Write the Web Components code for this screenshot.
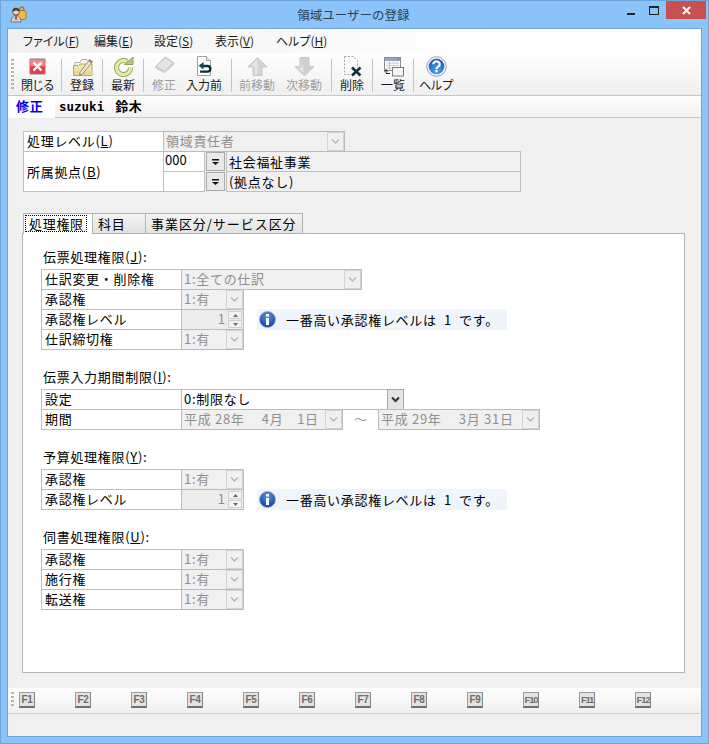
<!DOCTYPE html>
<html lang="ja">
<head>
<meta charset="utf-8">
<title>領域ユーザーの登録</title>
<style>
  html, body { margin: 0; padding: 0; }
  body { font-family: "Noto Sans CJK JP", "Liberation Sans", sans-serif; font-size: 13px; color: #000; }
</style>
</head>
<body>

<app-window caption="領域ユーザーの登録">
  <menu-bar>
    <menu-item label="ファイル" key="F" style="width:71px"></menu-item>
    <menu-item label="編集" key="E" style="width:60px"></menu-item>
    <menu-item label="設定" key="S" style="width:61px"></menu-item>
    <menu-item label="表示" key="V" style="width:61px"></menu-item>
    <menu-item label="ヘルプ" key="H"></menu-item>
  </menu-bar>

  <tool-bar>
    <tool-btn label="閉じる" style="width:47px" icon="close"></tool-btn>
    <tool-sep></tool-sep>
    <tool-btn label="登録" style="width:40px" icon="save"></tool-btn>
    <tool-sep></tool-sep>
    <tool-btn label="最新" style="width:40px" icon="refresh"></tool-btn>
    <tool-sep></tool-sep>
    <tool-btn label="修正" style="width:40px" icon="eraser" disabled></tool-btn>
    <tool-btn label="入力前" style="width:40px;margin-right:7px" icon="back"></tool-btn>
    <tool-sep></tool-sep>
    <tool-btn label="前移動" style="width:50px" icon="up" disabled></tool-btn>
    <tool-btn label="次移動" style="width:44px;margin-right:5px" icon="down" disabled></tool-btn>
    <tool-sep></tool-sep>
    <tool-btn label="削除" style="width:40px" icon="del"></tool-btn>
    <tool-sep></tool-sep>
    <tool-btn label="一覧" style="width:40px" icon="list"></tool-btn>
    <tool-sep></tool-sep>
    <tool-btn label="ヘルプ" style="width:44px" icon="help"></tool-btn>
  </tool-bar>

  <record-strip mode="修正" user="suzuki" name="鈴木"></record-strip>

  <form-body>
    <div slot="head">
      <f-row label="処理レベル" key="L"><f-combo w="182" disabled>領域責任者</f-combo></f-row>
      <branch-field label="所属拠点" key="B">
        <branch-line code="000" name="社会福祉事業"></branch-line>
        <branch-line code="" name="(拠点なし)"></branch-line>
      </branch-field>
    </div>

    <tab-strip>
      <tab-head selected style="width:70px">処理権限</tab-head>
      <tab-head style="width:53px">科目</tab-head>
      <tab-head style="width:157px;letter-spacing:.95px">事業区分/サービス区分</tab-head>
    </tab-strip>

    <tab-panel>
      <f-section label="伝票処理権限" key="J">
        <f-row label="仕訳変更・削除権"><f-combo w="181" disabled>1:全ての仕訳</f-combo></f-row>
        <f-row label="承認権"><f-combo w="63" disabled>1:有</f-combo></f-row>
        <f-row label="承認権レベル"><f-spin value="1"></f-spin><info-note slot="after">一番高い承認権レベルは  1  です。</info-note></f-row>
        <f-row label="仕訳締切権"><f-combo w="63" disabled>1:有</f-combo></f-row>
      </f-section>

      <f-section label="伝票入力期間制限" key="I">
        <f-row label="設定"><f-combo w="223">0:制限なし</f-combo></f-row>
        <f-row label="期間">
          <f-combo w="162" disabled>平成 28年　 4月　1日</f-combo>
          <date-sep slot="after">～</date-sep>
          <f-combo slot="after" w="162" disabled>平成 29年　 3月 31日</f-combo>
        </f-row>
      </f-section>

      <f-section label="予算処理権限" key="Y">
        <f-row label="承認権"><f-combo w="63" disabled>1:有</f-combo></f-row>
        <f-row label="承認権レベル"><f-spin value="1"></f-spin><info-note slot="after">一番高い承認権レベルは  1  です。</info-note></f-row>
      </f-section>

      <f-section label="伺書処理権限" key="U">
        <f-row label="承認権"><f-combo w="63" disabled>1:有</f-combo></f-row>
        <f-row label="施行権"><f-combo w="63" disabled>1:有</f-combo></f-row>
        <f-row label="転送権"><f-combo w="63" disabled>1:有</f-combo></f-row>
      </f-section>
    </tab-panel>
  </form-body>

  <fkey-bar></fkey-bar>
  <status-bar></status-bar>
</app-window>

<script>
const ICONS = {
  close: `<rect x="2.5" y="2.5" width="16" height="16" rx="1.5" fill="#e4515c" stroke="#bdbdbd"/><rect x="3.5" y="3.500" width="14" height="6.500" fill="#f28a90"/><rect x="3.5" y="11" width="14" height="6.500" fill="#dd3f4c"/><path d="M6.5 6.500l8 8M14.5 6.500l-8 8" stroke="#fff" stroke-width="2.400"/>`,
  save: `<path d="M3 6.500h5l1.500-3H15l2 2v8H3z" fill="#fbfbf6" stroke="#b8ad8c"/><path d="M1.500 9.500h5l1.500-1.500h12v11.500H1.500z" fill="#f1e3b1" stroke="#bba86f"/><path d="M2 15h18v4H2z" fill="#e8d59a"/><path d="M8 16.500L17.500 3.500l3 2-10 12.500-3 1z" fill="#efe8d2" stroke="#8a7a5a" stroke-width=".8"/><path d="M17 4.500l3 2" stroke="#c9674f" stroke-width="1.800"/>`,
  refresh: `<path d="M17.500 11.500a7 7 0 1 1-3.500-6" fill="none" stroke="#8fa455" stroke-width="5"/><path d="M17.500 11.500a7 7 0 1 1-3.500-6" fill="none" stroke="#e2edac" stroke-width="3.200"/><path d="M11.500 8.500H20V1z" fill="#b9c48c" stroke="#8fa455"/>`,
  eraser: `<path d="M1.500 10.500L10.500 1.500q1-.8 2 0l7 5q1 1 0 2L11 16q-1 .8-2 0l-7.500-4.500q-.6-.5 0-1z" fill="#d6d6d6" stroke="#c4c4c4"/><path d="M3 10L11 2.500l6.500 4.500L9.500 14.500z" fill="#e4e4e4"/><path d="M2 11l7.500 5 .5-2" fill="#cacaca"/>`,
  back: `<path d="M3.500 .5h9l4 4v15h-13z" fill="#fff" stroke="#9f9f9f"/><path d="M12.500 .5v4h4" fill="#e9e9e9" stroke="#9f9f9f"/><path d="M9 10h4.500a2.800 2.800 0 0 1 0 5.600H6" fill="none" stroke="#0d2e38" stroke-width="2.400"/><path d="M9.500 6v7.500L4.500 9.800z" fill="#0f4a58"/>`,
  up: `<path d="M10.500 1.500L20 11h-5v8.500H6V11H1z" fill="#d4d4d4" stroke="#c8c8c8"/><path d="M10.500 3L4 9.500h4V18h2.500z" fill="#e6e6e6"/>`,
  down: `<path d="M10.500 20L1 10.500h5V1.500h9v9h5z" fill="#cfcfcf" stroke="#c8c8c8"/><path d="M7.500 2.500v9H4l6 6z" fill="#e2e2e2"/>`,
  del: `<path d="M2.500 .5h9l4 4v7M2.500 .5v18h6" fill="none" stroke="#a5a5a5" stroke-dasharray="2 1.500"/><path d="M10 11.500l8.500 8M18.500 11.500l-8.500 8" stroke="#16323a" stroke-width="2.600"/>`,
  list: `<rect x="1.500" y="1.500" width="16" height="13" fill="#fff" stroke="#8d8d8d"/><rect x="2" y="2" width="15" height="3" fill="#95a6bb"/><rect x="14" y="2.500" width="2.500" height="1.500" fill="#d9646a"/><path d="M3 7h13M3 9.500h13M3 12h6M6.500 5.500v8" stroke="#bcc6d2"/><rect x="9.500" y="11.500" width="11" height="8.500" fill="#f4f4f4" stroke="#7a7a7a"/><path d="M3 17v-3M1.500 15.500L3 13.500l1.500 2M3 17.500h4" stroke="#222" fill="none"/>`,
  help: `<defs><radialGradient id="h" cx=".5" cy=".75" r=".75"><stop offset="0" stop-color="#4aa8ee"/><stop offset="1" stop-color="#1a53b8"/></radialGradient></defs><circle cx="10.500" cy="10.500" r="9.800" fill="#eef1f5" stroke="#99a2ac"/><circle cx="10.500" cy="10.500" r="7.800" fill="url(#h)"/><path d="M7.300 8.200a3.200 2.800 0 1 1 5 2.300c-1.100.7-1.800 1.100-1.800 2.500" fill="none" stroke="#fff" stroke-width="2.200"/><rect x="9.300" y="14" width="2.400" height="2.300" fill="#fff"/>`
};

// little helper, every element here is just a template + open shadow root
function define(tag, html, setup) {
  const tpl = document.createElement('template');
  tpl.innerHTML = html.trim().replace(/>\s+</g, '><');
  customElements.define(tag, class extends HTMLElement {
    connectedCallback() {
      if (this.shadowRoot) return;
      const root = this.attachShadow({ mode: 'open' });
      root.appendChild(tpl.content.cloneNode(true));
      if (setup) setup(this, root);
    }
  });
}

function mnemonic(label, key) {
  return key ? `${label}(<u>${key}</u>)` : label;
}

define('app-window', `
<style>
  :host { display: block; width: 709px; height: 744px; box-sizing: border-box; }
  .frame { width: 100%; height: 100%; box-sizing: border-box; display: flex; flex-direction: column;
    background: #8ac4fb; border: 1px solid #6ea6dc; }
  .title { height: 27px; flex: none; display: flex; align-items: flex-start; }
  .appicon { width: 18px; height: 18px; margin: 5px 0 0 8px; flex: none; }
  .cap { flex: 1; text-align: center; font-size: 12.5px; line-height: 28px; color: #2f3f4c; padding-left: 53px; }
  .ctl { display: flex; flex: none; align-items: flex-start; margin-right: 2px; }
  .min { width: 8px; height: 2px; background: #222; margin: 12px 14px 0 0; }
  .max { width: 8px; height: 6px; border: 1px solid #222; border-top-width: 2px; margin: 5px 7px 0 0; }
  .x { width: 40px; height: 18px; background: #c75050; color: #fff; display: flex; align-items: center; justify-content: center; }
  .client { flex: 1; margin: 0 6px 6px; border: 1px solid #6ea6dc; background: #f0f0f0; display: flex; flex-direction: column; min-height: 0; }
</style>
<div class="frame">
  <div class="title">
    <svg class="appicon" viewBox="0 0 18 18">
      <rect x="9" y="4.500" width="8" height="9" rx="2" fill="#f6bb3e" stroke="#a47a24"/>
      <path d="M10.800 5V3a2 2 0 0 1 4 0v2" fill="none" stroke="#a47a24" stroke-width="1.400"/>
      <path d="M2 16c0-4.500 2-6.500 5-6.500s5 2 5 6.500z" fill="#d2d2d2" stroke="#777"/>
      <circle cx="7" cy="5.500" r="3.500" fill="#f0d8bf" stroke="#6b5b4b"/>
      <path d="M3.500 5.500a3.500 3.500 0 0 1 7 0c-2 0-3-1-3.500-1.500-.5.800-2 1.500-3.500 1.500z" fill="#4a3a2c"/>
      <path d="M6.200 10h1.600l.4 2.500-1.200 2-1.200-2z" fill="#c7453f"/>
    </svg>
    <div class="cap"></div>
    <div class="ctl">
      <div class="min"></div>
      <div class="max"></div>
      <div class="x"><svg width="9" height="9" viewBox="0 0 9 9"><path d="M1 1l7 7M8 1L1 8" stroke="#fff" stroke-width="2"/></svg></div>
    </div>
  </div>
  <div class="client"><slot></slot></div>
</div>`, (el, root) => {
  root.querySelector('.cap').textContent = el.getAttribute('caption');
});

define('menu-bar', `
<style>
  :host { display: flex; height: 24px; flex: none; padding-left: 15px; align-items: center;
    background: linear-gradient(90deg, #f0f0f0, #fff 70%); }
</style><slot></slot>`);

define('menu-item', `
<style>
  :host { display: block; font-size: 12px; line-height: 24px; color: #1a1a1a; font-feature-settings: "palt"; white-space: nowrap; flex: none; }
</style><span></span>`, (el, root) => {
  root.querySelector('span').innerHTML = mnemonic(el.getAttribute('label'), el.getAttribute('key'));
});

define('tool-bar', `
<style>
  :host { display: flex; height: 42px; flex: none; padding-left: 3px; box-sizing: border-box; align-items: stretch;
    background: linear-gradient(#fff, #efefef); border-radius: 0 3px 0 0; }
  .grip { width: 3px; margin: 6px 0 6px 0; flex: none;
    background: repeating-linear-gradient(#b5b5b5 0 2px, transparent 2px 4px); }
</style><div class="grip"></div><slot></slot>`);

define('tool-btn', `
<style>
  :host { display: flex; flex-direction: column; align-items: center; flex: none; box-sizing: border-box; }
  svg { width: 21px; height: 21px; margin-top: 3px; flex: none; overflow: visible; }
  span { font-size: 12px; line-height: 16px; margin-top: 0; white-space: nowrap; color: #1a1a1a; font-feature-settings: "palt"; }
  :host([disabled]) span { color: #9c9c9c; }
</style><svg viewBox="0 0 21 21"></svg><span></span>`, (el, root) => {
  root.querySelector('svg').innerHTML = ICONS[el.getAttribute('icon')];
  root.querySelector('span').textContent = el.getAttribute('label');
});

define('tool-sep', `
<style>
  :host { display: block; width: 1px; flex: none; margin: 6px 0 3px; background: #c4c4c4; }
</style>`);

define('record-strip', `
<style>
  :host { display: flex; height: 23px; flex: none; box-sizing: border-box; align-items: stretch;
    border-top: 1px solid #c6c6c6; border-bottom: 1px solid #c6c6c6; background: linear-gradient(#fff, #f1f1f1); font-weight: bold; white-space: nowrap; }
  .mode { width: 47px; background: #fff; color: #0000e6; padding-left: 8px; box-sizing: border-box; font-size: 13px; line-height: 20px; letter-spacing: .7px; margin-bottom: -1px; }
  .who { padding-left: 4px; font-size: 13px; line-height: 20px; letter-spacing: .7px; }
  .latin { font-family: "DejaVu Sans Mono", "Liberation Mono", monospace; font-size: 12.500px; letter-spacing: 0; margin-right: 11px; }
</style><div class="mode"></div><div class="who"><span class="latin"></span><span class="nm"></span></div>`, (el, root) => {
  root.querySelector('.mode').textContent = el.getAttribute('mode');
  root.querySelector('.latin').textContent = el.getAttribute('user');
  root.querySelector('.nm').textContent = el.getAttribute('name');
});

define('form-body', `
<style>
  :host { display: block; height: 570px; flex: none; box-sizing: border-box; padding: 13px 0 0 14px; background: #f0f0f0; }
  .head { margin: 0 0 21px 1px; height: 61px; }
</style><div class="head"><slot name="head"></slot></div><slot></slot>`);

define('f-row', `
<style>
  :host { display: flex; height: 20px; align-items: flex-start; font-size: 13px; }
  .lab { box-sizing: border-box; width: 141px; height: 21px; flex: none; border: 1px solid #c0c0c0; background: #fff;
    padding-left: 3px; line-height: 17px; letter-spacing: .7px; white-space: pre; }
  .field { margin-left: -1px; display: flex; flex: none; }
  .after { display: flex; align-items: flex-start; margin-left: 13px; }
</style><div class="lab"></div><div class="field"><slot></slot></div><div class="after"><slot name="after"></slot></div>`, (el, root) => {
  root.querySelector('.lab').innerHTML = mnemonic(el.getAttribute('label'), el.getAttribute('key'));
  if (el.querySelector('date-sep')) root.querySelector('.after').style.marginLeft = '0';
});

define('date-sep', `
<style>
  :host { display: block; width: 35px; text-align: center; color: #999; line-height: 20px; font-size: 13px; }
</style><slot></slot>`);

define('f-combo', `
<style>
  :host { display: block; box-sizing: border-box; height: 21px; flex: none; border: 1px solid #bcbcbc; background: #fff; position: relative; font-size: 13px; }
  :host([disabled]) { background: #f0f0f0; color: #8f8f8f; }
  .row { display: flex; height: 19px; }
  .txt { flex: 1; padding-left: 2px; line-height: 18px; letter-spacing: .7px; overflow: hidden; white-space: pre; }
  .btn { width: 17px; flex: none; display: flex; align-items: center; justify-content: center; box-sizing: border-box;
    background: #e4e4e4; border: 1px solid #a8a8a8; margin: -1px -1px -1px 0; height: 21px; }
  :host([disabled]) .btn { background: #f0f0f0; border-color: #d4d4d4; margin: 0; height: 19px; border-width: 1px; }
  svg { width: 9px; height: 7px; }
  path { fill: none; stroke: #333; stroke-width: 2; }
  :host([disabled]) path { stroke: #b5b5b5; stroke-width: 1.500; }
</style>
<div class="row"><div class="txt"><slot></slot></div>
<div class="btn"><svg viewBox="0 0 9 7"><path d="M1 1.500l3.500 3.500 3.500-3.500"/></svg></div></div>`, (el) => {
  el.style.width = el.getAttribute('w') + 'px';
});

define('f-spin', `
<style>
  :host { display: flex; box-sizing: border-box; width: 63px; height: 21px; flex: none; border: 1px solid #bcbcbc; background: #ececec; color: #8f8f8f; font-size: 13px; }
  .v { flex: 1; text-align: right; padding-right: 3px; line-height: 17px; }
  .sp { width: 15px; flex: none; display: flex; flex-direction: column; gap: 1px; padding: 1px 1px 1px 0; box-sizing: border-box; }
  .sp div { flex: 1; background: #f4f4f4; border: 1px solid #d0d0d0; display: flex; align-items: center; justify-content: center; }
  svg { width: 5px; height: 3px; }
</style>
<div class="v"></div>
<div class="sp"><div><svg viewBox="0 0 5 3"><path d="M2.500 0L5 3H0z" fill="#666"/></svg></div><div><svg viewBox="0 0 5 3"><path d="M2.500 3L5 0H0z" fill="#666"/></svg></div></div>`, (el, root) => {
  root.querySelector('.v').textContent = el.getAttribute('value');
});

define('info-note', `
<style>
  :host { display: flex; align-items: center; width: 250px; height: 21px; box-sizing: border-box; background: #f0f5fb; padding-left: 2px; font-size: 13px; }
  svg { width: 17px; height: 17px; flex: none; margin-right: 10px; }
  span { letter-spacing: .7px; white-space: pre; }
</style>
<svg viewBox="0 0 17 17">
  <defs><radialGradient id="b" cx=".5" cy=".3" r=".8"><stop offset="0" stop-color="#5d94e0"/><stop offset=".7" stop-color="#1c4fae"/><stop offset="1" stop-color="#163f8e"/></radialGradient></defs>
  <circle cx="8.500" cy="8.500" r="8" fill="url(#b)" stroke="#9fb2cf"/>
  <rect x="7" y="3" width="3" height="2.500" fill="#fff"/><rect x="7" y="7" width="3" height="7" fill="#fff"/>
</svg><span><slot></slot></span>`);

define('branch-field', `
<style>
  :host { display: flex; height: 41px; font-size: 13px; }
  .lab { box-sizing: border-box; width: 141px; height: 41px; flex: none; border: 1px solid #c0c0c0; background: #fff;
    padding-left: 3px; line-height: 39px; letter-spacing: .7px; white-space: pre; }
  .lines { margin-left: -1px; }
</style><div class="lab"></div><div class="lines"><slot></slot></div>`, (el, root) => {
  root.querySelector('.lab').innerHTML = mnemonic(el.getAttribute('label'), el.getAttribute('key'));
});

define('branch-line', `
<style>
  :host { display: flex; height: 20px; width: 358px; font-size: 13px; }
  .code { box-sizing: border-box; width: 42px; height: 21px; flex: none; border: 1px solid #c0c0c0; background: #fff; padding-left: 1px; line-height: 16px; }
  .btn { box-sizing: border-box; width: 19px; height: 19px; margin: 1px 1px 0 1px; flex: none; border: 1px solid #a9a9a9; background: #e9e9e9; display: flex; align-items: center; justify-content: center; }
  .name { flex: 1; box-sizing: border-box; height: 21px; border: 1px solid #c0c0c0; background: #f0f0f0; padding-left: 2px; line-height: 19px; letter-spacing: .7px; white-space: pre; }
  svg { width: 7px; height: 6px; }
</style>
<div class="code"></div>
<div class="btn"><svg viewBox="0 0 7 6"><path d="M0 0h7v1.500H0zM0 3h7L3.500 6z" fill="#111"/></svg></div>
<div class="name"></div>`, (el, root) => {
  root.querySelector('.code').textContent = el.getAttribute('code');
  root.querySelector('.name').textContent = el.getAttribute('name');
});

define('tab-strip', `
<style>
  :host { display: flex; height: 20px; margin-left: 1px; align-items: flex-end; }
</style><slot></slot>`);

define('tab-head', `
<style>
  :host { display: block; box-sizing: border-box; height: 20px; flex: none; border: 1px solid #b4b4b4; border-bottom: none; border-left: none;
    background: linear-gradient(#f4f4f4, #e2e2e2); font-size: 13px; line-height: 19px; letter-spacing: .7px; padding-left: 5px; white-space: nowrap; }
  :host([selected]) { background: #fff; border-left: 1px solid #b4b4b4; padding: 2px 0 0 2px; margin-bottom: -1px; height: 21px; position: relative; z-index: 1; line-height: 15px; }
  :host([selected]) span { display: inline-block; outline: 1px dotted #000; padding: 0 2px 0 3px; }
</style><span><slot></slot></span>`);

define('tab-panel', `
<style>
  :host { display: block; box-sizing: border-box; width: 663px; height: 440px; border: 1px solid #b4b4b4; background: #fff; padding: 15px 0 0 18px; }
</style><slot></slot>`);

define('f-section', `
<style>
  :host { display: block; margin-bottom: 19px; font-size: 13px; }
  .h { height: 20px; padding-left: 2px; line-height: 16px; letter-spacing: .7px; white-space: pre; }
  .rows { padding-bottom: 1px; }
</style><div class="h"></div><div class="rows"><slot></slot></div>`, (el, root) => {
  root.querySelector('.h').innerHTML = mnemonic(el.getAttribute('label'), el.getAttribute('key')) + ':';
});

define('fkey-bar', `
<style>
  :host { display: flex; height: 26px; flex: none; box-sizing: border-box; padding: 4px 0 0 3px; gap: 0; align-items: flex-start;
    background: linear-gradient(#fff, #efefef); border-bottom: 1px solid #cfcfcf; }
  .grip { width: 3px; height: 14px; flex: none; margin-right: 5px; background: repeating-linear-gradient(#b5b5b5 0 2px, transparent 2px 4px); }
  .k { box-sizing: border-box; width: 16px; height: 16px; margin-right: 40px; flex: none; border: 1px solid #9c9c9c; border-bottom: 2px solid #6f6f6f; border-right-color: #808080;
    background: #e4e4e4; color: #6e6e6e; font: bold 10px/13px "Liberation Sans", sans-serif; text-align: center; letter-spacing: -.3px; overflow: hidden; white-space: nowrap; }
  .k.wide { letter-spacing: -1.2px; font-size: 9.500px; }
</style><div class="grip"></div>`, (el, root) => {
  for (let i = 1; i <= 12; i++) {
    const k = document.createElement('div');
    k.className = i > 9 ? 'k wide' : 'k';
    k.textContent = 'F' + i;
    root.appendChild(k);
  }
});

define('status-bar', `
<style>
  :host { display: block; flex: 1; background: #f0f0f0; }
</style>`);
</script>
</body>
</html>
